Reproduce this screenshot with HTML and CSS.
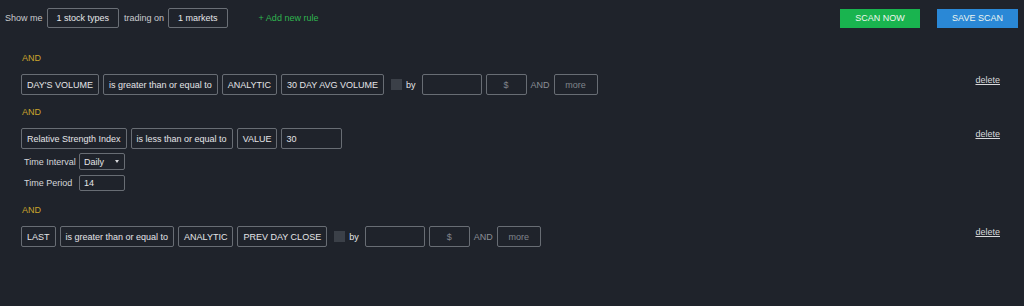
FILE: index.html
```html
<!DOCTYPE html>
<html lang="en">
<head>
  <meta charset="UTF-8" />
  <title>Scanner</title>
  <link rel="stylesheet" href="styles.css">
</head>
<body>
  <div class="topbar">
    <span class="label">Show me</span>
    <span class="pick">1 stock types</span>
    <span class="label">trading on</span>
    <span class="pick">1 markets</span>
    <a class="add-rule">+ Add new rule</a>
    <div class="actions">
      <button class="btn scan">SCAN NOW</button>
      <button class="btn save">SAVE SCAN</button>
    </div>
  </div>

  <div class="rules">
    <div class="rule first">
      <div class="and">AND</div>
      <div class="row">
        <span class="field">DAY'S VOLUME</span>
        <span class="field">is greater than or equal to</span>
        <span class="field">ANALYTIC</span>
        <span class="field">30 DAY AVG VOLUME</span>
        <span class="check"></span>
        <span class="by">by</span>
        <span class="input amount"></span>
        <span class="input unit">$</span>
        <span class="and-inline">AND</span>
        <span class="input more">more</span>
        <a class="delete">delete</a>
      </div>
    </div>

    <div class="rule">
      <div class="and">AND</div>
      <div class="row">
        <span class="field">Relative Strength Index</span>
        <span class="field">is less than or equal to</span>
        <span class="field">VALUE</span>
        <span class="input value">30</span>
        <a class="delete">delete</a>
      </div>
      <div class="param interval">
        <span class="param-label">Time Interval</span>
        <span class="select">Daily<span class="caret"></span></span>
      </div>
      <div class="param period">
        <span class="param-label">Time Period</span>
        <span class="select">14</span>
      </div>
    </div>

    <div class="rule last">
      <div class="and">AND</div>
      <div class="row">
        <span class="field">LAST</span>
        <span class="field">is greater than or equal to</span>
        <span class="field">ANALYTIC</span>
        <span class="field">PREV DAY CLOSE</span>
        <span class="check"></span>
        <span class="by">by</span>
        <span class="input amount"></span>
        <span class="input unit">$</span>
        <span class="and-inline">AND</span>
        <span class="input more">more</span>
        <a class="delete">delete</a>
      </div>
    </div>
  </div>
</body>
</html>
```

FILE: styles.css
```css
body {
  margin: 0;
  background: #1f232b;
  font-family: 'Liberation Sans', Arial, sans-serif;
  font-size: 9px;
  color: #dcdde0;
  height: 306px;
  overflow: hidden;
}

.topbar {
  display: flex;
  align-items: center;
  padding: 8px 6px 0 5px;
  height: 20px;
}

.label {
  color: #c9cbcf;
  margin-right: 4px;
}

.pick {
  display: inline-flex;
  align-items: center;
  justify-content: center;
  height: 18px;
  padding: 0 9px;
  border: 1px solid #6a6f76;
  border-radius: 2px;
  margin-right: 5px;
  color: #e6e7ea;
}

.add-rule {
  color: #2fb54f;
  margin-left: 26px;
}

.actions {
  margin-left: auto;
  display: flex;
  gap: 17px;
}

.btn {
  border: none;
  height: 19px;
  width: 80px;
  font-family: inherit;
  font-size: 9px;
  color: #eef6f0;
  padding: 0;
  cursor: pointer;
}

.btn.scan { background: #19b44f; }
.btn.save { background: #2a88d6; width: 81px; }

.rules {
  padding: 0 24px 0 21px;
}

.rule {
  margin-top: 12px;
}

.rule.first { margin-top: 25px; }
.rule.last { margin-top: 14px; }

.and {
  color: #caa52b;
  line-height: 10px;
  height: 10px;
  margin-left: 1px;
  margin-bottom: 11px;
}

.row {
  display: flex;
  align-items: center;
  gap: 4px;
  height: 21px;
}

.field, .input {
  display: inline-flex;
  align-items: center;
  justify-content: center;
  box-sizing: border-box;
  height: 21px;
  padding: 0 5px;
  border: 1px solid #686d74;
  border-radius: 2px;
  color: #e4e5e8;
  white-space: nowrap;
}

.check {
  width: 11px;
  height: 11px;
  background: #3b4048;
  margin-left: 3px;
}

.by {
  color: #e4e5e8;
  margin-right: 2px;
}

.input { color: #80858c; }
.input.amount { width: 60px; }
.input.unit { width: 41px; }
.input.more { width: 44px; }
.input.value {
  width: 61px;
  justify-content: flex-start;
  padding-left: 4px;
  color: #e4e5e8;
}

.and-inline {
  color: #8a8e95;
}

.delete {
  margin-left: auto;
  color: #d8d9dc;
  text-decoration: underline;
  align-self: flex-start;
  margin-top: 1px;
}

.param {
  display: flex;
  align-items: center;
  margin-left: 3px;
}

.param.interval { margin-top: 4px; height: 17px; }
.param.period { margin-top: 5px; height: 16px; }

.param-label {
  width: 55px;
  color: #d5d6d9;
}

.select {
  display: inline-flex;
  align-items: center;
  box-sizing: border-box;
  width: 46px;
  height: 100%;
  padding: 0 4px;
  border: 1px solid #686d74;
  border-radius: 2px;
  color: #e4e5e8;
}

.caret {
  margin-left: auto;
  margin-right: 1px;
  border-left: 2.5px solid transparent;
  border-right: 2.5px solid transparent;
  border-top: 3px solid #d8d9dc;
}
```
